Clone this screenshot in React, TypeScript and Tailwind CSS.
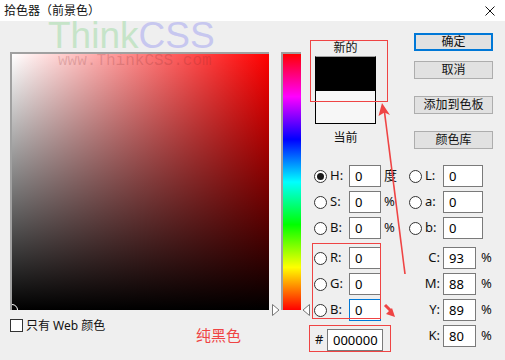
import React from "react";

function Radio({ checked = false }: { checked?: boolean }) {
  return (
    <span className="flex h-[13px] w-[13px] shrink-0 items-center justify-center rounded-full border border-[#333] bg-white">
      {checked && <span className="h-[7px] w-[7px] rounded-full bg-[#1a1a1a]" />}
    </span>
  );
}

function Field({ value, w, focused = false }: { value: string; w: string; focused?: boolean }) {
  return (
    <div
      className={`h-[22px] ${w} shrink-0 border bg-white pl-[5px] text-[13px] leading-[20px] text-black ${
        focused ? "border-[#0078d7]" : "border-[#7a7a7a]"
      }`}
    >
      {value}
    </div>
  );
}

function LeftRow({ label, value, unit, checked, focused }: { label: string; value: string; unit?: string; checked?: boolean; focused?: boolean }) {
  return (
    <div className="flex h-[22px] items-center pl-[4px]">
      <Radio checked={checked} />
      <span className="ml-[3px] w-[19px] text-[13px]">{label}</span>
      <Field value={value} w="w-[32px]" focused={focused} />
      {unit && <span className="pl-[3px] text-[13px]">{unit}</span>}
    </div>
  );
}

function LabRow({ label, value }: { label: string; value: string }) {
  return (
    <div className="flex h-[22px] items-center">
      <Radio />
      <span className="ml-[3px] w-[18px] text-[13px]">{label}</span>
      <Field value={value} w="w-[40px]" />
    </div>
  );
}

function CmykRow({ label, value }: { label: string; value: string }) {
  return (
    <div className="flex h-[22px] items-center">
      <span className="w-[31px] text-right text-[13px]">{label}</span>
      <div className="ml-[3px]">
        <Field value={value} w="w-[33px]" />
      </div>
      <span className="ml-[5px] text-[13px]">%</span>
    </div>
  );
}

function Button({ children, primary = false, className = "" }: { children: React.ReactNode; primary?: boolean; className?: string }) {
  return (
    <div
      className={`flex h-[18px] w-[79px] items-center justify-center bg-[#e1e1e1] text-[12px] leading-none ${
        primary ? "border-2 border-[#0078d7]" : "border border-[#adadad]"
      } ${className}`}
    >
      {children}
    </div>
  );
}

export default function App() {
  return (
    <div className="relative h-[360px] w-[505px] overflow-hidden bg-[#efefef] font-['Noto_Sans','Noto_Sans_CJK_SC',sans-serif] text-[#111]">
      {/* Title bar */}
      <div className="flex h-[21px] items-center justify-between bg-white pl-[4px] pr-[10px]">
        <span className="text-[12px] leading-none">拾色器（前景色）</span>
        <svg width="10" height="10" viewBox="0 0 10 10">
          <path d="M0.5 0.5L9.5 9.5M9.5 0.5L0.5 9.5" stroke="#111" strokeWidth="1" />
        </svg>
      </div>

      <div className="flex">
        {/* Colour field + hue */}
        <div className="flex pl-[10px] pt-[31px]">
          <div className="flex flex-col">
            <div className="relative h-[258px] w-[259px] overflow-hidden border-l-2 border-t-2 border-[#a0a0a0] bg-[linear-gradient(to_top,#000,transparent),linear-gradient(to_right,#fff,#f00)]">
              <span className="absolute left-[46px] top-[-1px] font-['Liberation_Mono',monospace] text-[16px] leading-[16px] text-[rgba(120,40,40,0.2)]">
                www.ThinkCSS.com
              </span>
              <span className="absolute bottom-[-6px] left-[-6px] h-[12px] w-[12px] rounded-full border border-white" />
            </div>
            <div className="mt-[9px] flex items-center">
              <span className="h-[13px] w-[13px] border border-[#333] bg-white" />
              <span className="ml-[3px] text-[12px] leading-none">只有 Web 颜色</span>
            </div>
          </div>
          <div className="relative ml-[12px] h-[258px] w-[20px] border-l-2 border-t-2 border-[#a0a0a0] bg-[linear-gradient(to_bottom,#f00,#f0f,#00f,#0ff,#0f0,#ff0,#f00)]">
            <svg className="absolute left-[-11px] top-[250px]" width="8" height="12" viewBox="0 0 8 12">
              <path d="M0.5 0.5L7 6L0.5 11.5Z" fill="#fff" stroke="#777" />
            </svg>
            <svg className="absolute left-[19px] top-[250px]" width="8" height="12" viewBox="0 0 8 12">
              <path d="M7.5 0.5L1 6L7.5 11.5Z" fill="#fff" stroke="#777" />
            </svg>
          </div>
        </div>

        {/* Right panel */}
        <div className="ml-[9px] flex w-[195px] flex-col">
          <div className="flex h-[144px]">
            <div className="flex w-[70px] flex-col pl-[5px] pt-[19px]">
              <span className="h-[16px] w-[61px] text-center text-[12px] leading-[16px]">新的</span>
              <div className="flex h-[68px] w-[61px] flex-col border border-black border-t-[#a0a0a0]">
                <div className="h-[34px] bg-black" />
                <div className="flex-1 bg-[#f7f7f7]" />
              </div>
              <span className="mt-[6px] w-[61px] text-center text-[12px] leading-[16px]">当前</span>
            </div>
            <div className="ml-[34px] flex flex-col pt-[12px]">
              <Button primary>确定</Button>
              <Button className="mt-[10px]">取消</Button>
              <Button className="mt-[17px]">添加到色板</Button>
              <Button className="mt-[17px]">颜色库</Button>
            </div>
          </div>

          <div className="flex">
            <div className="flex w-[99px] flex-col">
              <LeftRow label="H:" value="0" unit="度" checked />
              <div className="mt-[4px]"><LeftRow label="S:" value="0" unit="%" /></div>
              <div className="mt-[4px]"><LeftRow label="B:" value="0" unit="%" /></div>
              <div className="mt-[8px]"><LeftRow label="R:" value="0" /></div>
              <div className="mt-[4px]"><LeftRow label="G:" value="0" /></div>
              <div className="mt-[4px]"><LeftRow label="B:" value="0" focused /></div>
              <div className="mt-[8px] flex h-[22px] items-center pl-[5px]">
                <span className="w-[12px] text-[13px]">#</span>
                <Field value="000000" w="w-[56px]" />
              </div>
            </div>
            <div className="flex flex-col">
              <LabRow label="L:" value="0" />
              <div className="mt-[4px]"><LabRow label="a:" value="0" /></div>
              <div className="mt-[4px]"><LabRow label="b:" value="0" /></div>
              <div className="mt-[8px]"><CmykRow label="C:" value="93" /></div>
              <div className="mt-[4px]"><CmykRow label="M:" value="88" /></div>
              <div className="mt-[4px]"><CmykRow label="Y:" value="89" /></div>
              <div className="mt-[4px]"><CmykRow label="K:" value="80" /></div>
            </div>
          </div>
        </div>
      </div>

      {/* Watermark */}
      <div className="pointer-events-none absolute left-[48px] top-[21px] font-['Liberation_Sans',sans-serif] text-[37px] leading-[30px]">
        <span className="text-[#c6e4c8]">Think</span>
        <span className="text-[#c7c7ef]">CSS</span>
      </div>

      {/* Annotations */}
      <div className="pointer-events-none absolute left-[310px] top-[40px] h-[62px] w-[78px] border border-[#ef4444]" />
      <div className="pointer-events-none absolute left-[312px] top-[243px] h-[76px] w-[69px] border border-[#ef4444]" />
      <div className="pointer-events-none absolute left-[309px] top-[325px] h-[27px] w-[82px] border border-[#ef4444]" />
      <span className="pointer-events-none absolute left-[196px] top-[326px] text-[15px] leading-[18px] text-[#ef4444]">纯黑色</span>
      <svg className="pointer-events-none absolute left-0 top-0" width="505" height="360">
        <path d="M405 274L384.5 112" stroke="#ef4444" strokeWidth="1.6" />
        <path d="M382 103L378.5 116L384.5 112.5L390 115Z" fill="#ef4444" />
        <path d="M385 305L391 311" stroke="#ef4444" strokeWidth="3" />
        <path d="M395 317L386 314L392 308Z" fill="#ef4444" />
      </svg>
    </div>
  );
}
